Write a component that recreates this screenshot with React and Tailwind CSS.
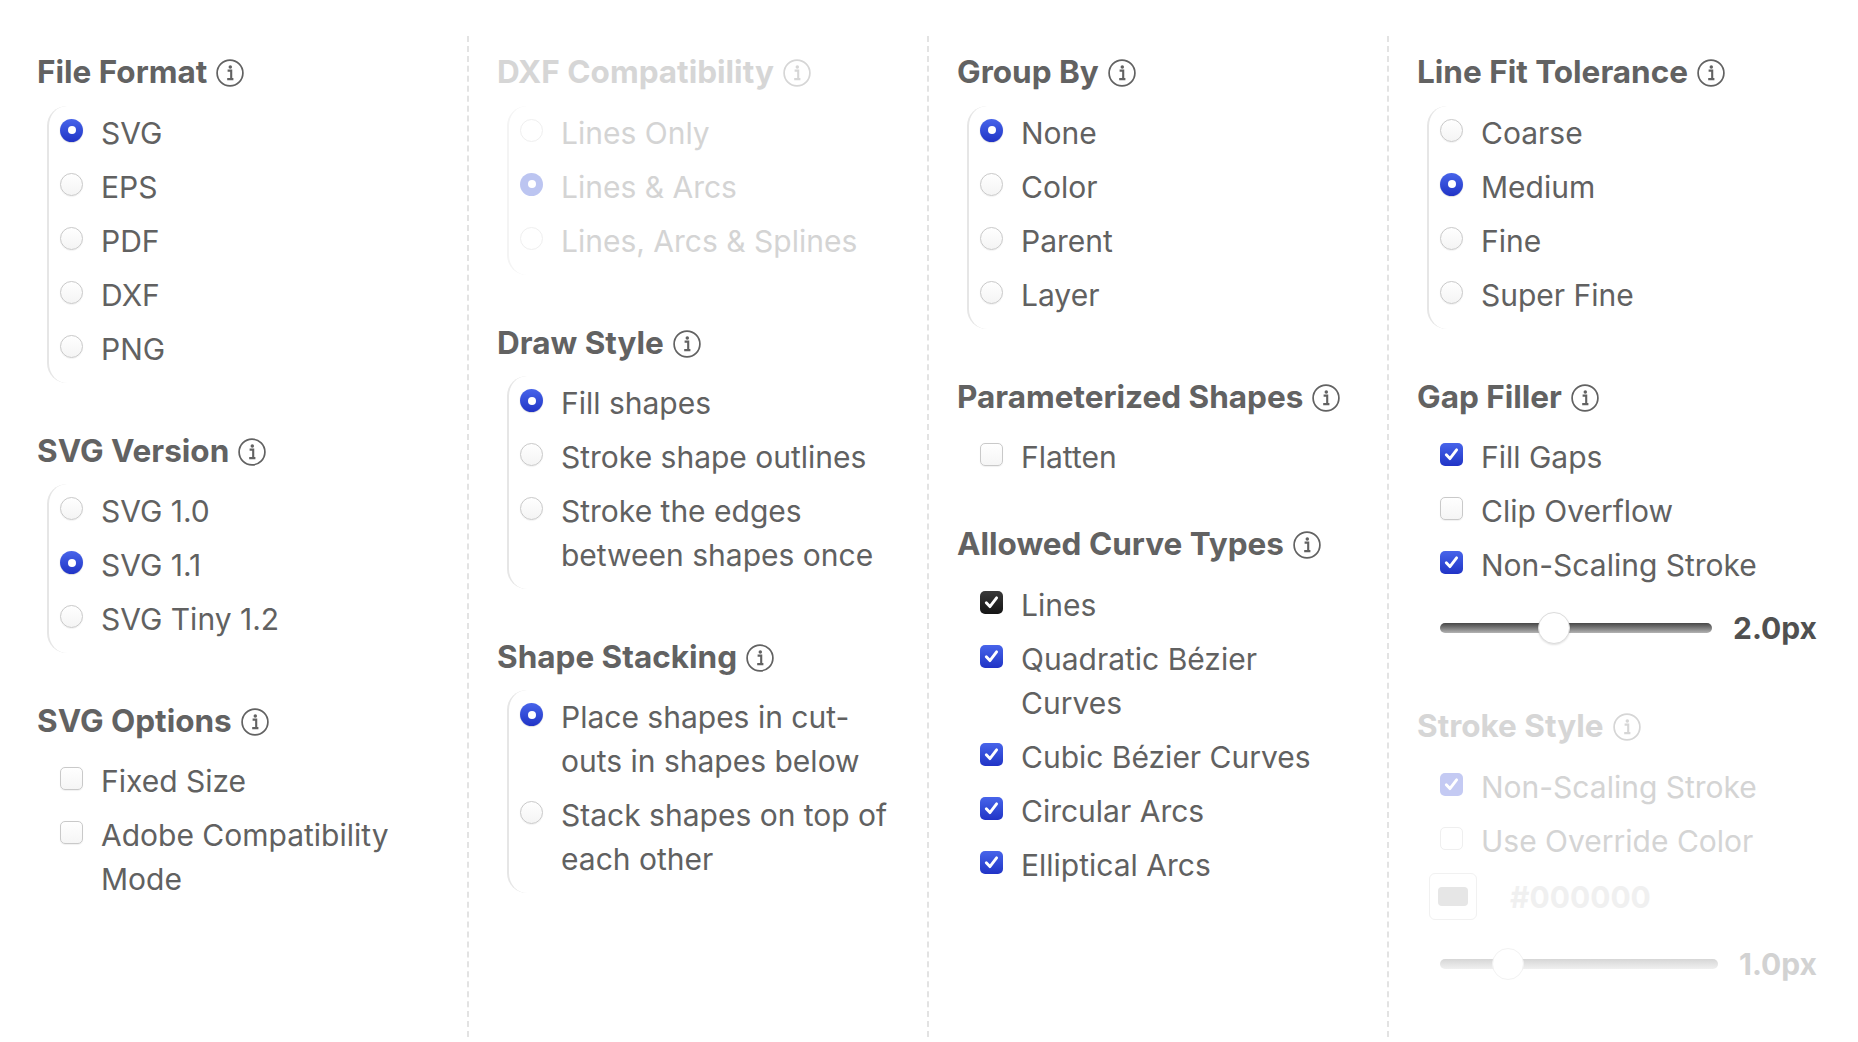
import React from "react";

function InfoIcon({ muted }) {
  const c = muted ? "#d6d6d6" : "#626262";
  return (
    <svg width="28" height="28" viewBox="0 0 28 28" className="ml-[9px] shrink-0 translate-y-[1px]">
      <circle cx="14" cy="14" r="12.9" fill="none" stroke={c} strokeWidth="1.7" />
      <circle cx="14.3" cy="7.9" r="1.75" fill={c} />
      <path d="M11.6 11.6 H15.2 V19.6 M11.2 20.1 H17.4" fill="none" stroke={c} strokeWidth="2.1" />
    </svg>
  );
}

function Heading({ title, disabled }) {
  return (
    <h3
      className={`flex items-center h-[38px] leading-[38px] text-[31.5px] font-bold ${
        disabled ? "text-[#d6d6d6]" : "text-[#626262]"
      }`}
    >
      {title}
      <InfoIcon muted={disabled} />
    </h3>
  );
}

function Radio({ checked, disabled }) {
  if (checked) {
    return (
      <span
        className={`mt-[8px] shrink-0 w-[23px] h-[23px] rounded-full flex items-center justify-center ${
          disabled
            ? "bg-[#bcc5f1]"
            : "bg-linear-to-b from-[#4864ea] to-[#2133c6] shadow-[0_0.5px_1px_rgba(0,0,0,0.25)]"
        }`}
      >
        <span className="w-[8px] h-[8px] rounded-full bg-white" />
      </span>
    );
  }
  return (
    <span
      className={`mt-[8px] shrink-0 w-[23px] h-[23px] rounded-full border ${
        disabled
          ? "border-[#efefef] bg-white"
          : "border-[#c9c9c9] bg-linear-to-b from-white to-[#f4f4f4] shadow-[0_0.5px_1px_rgba(0,0,0,0.08)]"
      }`}
    />
  );
}

function Check({ checked, disabled, dark }) {
  if (checked) {
    const bg = disabled
      ? "bg-[#c4caf3]"
      : dark
      ? "bg-linear-to-b from-[#3a3a3a] to-[#151515]"
      : "bg-linear-to-b from-[#4864ea] to-[#2133c6]";
    return (
      <span className={`mt-[8px] shrink-0 w-[23px] h-[23px] rounded-[5px] flex items-center justify-center ${bg}`}>
        <svg width="23" height="23" viewBox="0 0 23 23">
          <path d="M6.3 11.8 L9.9 15.6 L16.6 6.9" fill="none" stroke="white" strokeWidth="2.9" strokeLinecap="round" strokeLinejoin="round" />
        </svg>
      </span>
    );
  }
  return (
    <span
      className={`mt-[8px] shrink-0 w-[23px] h-[23px] rounded-[5px] border ${
        disabled
          ? "border-[#efefef] bg-white"
          : "border-[#c9c9c9] bg-linear-to-b from-white to-[#f5f5f5] shadow-[0_0.5px_1px_rgba(0,0,0,0.06)]"
      }`}
    />
  );
}

function Row({ label, type, checked, disabled, dark }) {
  return (
    <div className="flex items-start py-[5px]">
      {type === "radio" ? (
        <Radio checked={checked} disabled={disabled} />
      ) : (
        <Check checked={checked} disabled={disabled} dark={dark} />
      )}
      <span
        className={`ml-[18px] leading-[44px] text-[30px] ${
          disabled ? "text-[#d4d4d4]" : "text-[#616161]"
        }`}
      >
        {label}
      </span>
    </div>
  );
}

function Section({ title, type, items, disabled, extra }) {
  const bracket = type === "radio";
  return (
    <div>
      <Heading title={title} disabled={disabled} />
      <div
        className={`mt-[14.5px] ml-[10px] pl-[11px] border-l-2 ${
          bracket
            ? `rounded-l-[20px] pb-[7px] mb-[7.6px] ${disabled ? "border-[#f4f4f4]" : "border-[#e6e6e6]"}`
            : "border-transparent"
        }`}
      >
        {items.map((it) => (
          <Row key={it.label} type={type} disabled={disabled} {...it} />
        ))}
        {extra}
      </div>
    </div>
  );
}

function Slider({ value, label, disabled, className }) {
  return (
    <div className={`flex items-center h-[44px] ${className}`}>
      <div
        className={`relative flex-1 h-[10px] rounded-full ${
          disabled ? "bg-linear-to-b from-[#d6d6d6] to-[#f0f0f0]" : "bg-linear-to-b from-[#474747] to-[#b3b3b3]"
        }`}
      >
        <div
          className={`absolute top-1/2 -translate-y-1/2 w-[32px] h-[32px] rounded-full bg-white border ${
            disabled ? "border-[#f2f2f2]" : "border-[#dcdcdc] shadow-[0_1px_2px_rgba(0,0,0,0.12)]"
          }`}
          style={{ left: `calc(${value * 100}% - ${value * 32}px)` }}
        />
      </div>
      <span
        className={`ml-[21px] text-[30px] leading-[44px] font-bold ${
          disabled ? "text-[#d2d2d2]" : "text-[#505050]"
        }`}
      >
        {label}
      </span>
    </div>
  );
}

const r = (label, checked) => ({ label, checked });

export default function App() {
  return (
    <div className="w-[1858px] h-[1042px] bg-white pt-[36px] font-[Inter,'Noto_Sans',sans-serif] overflow-hidden">
      <div className="ml-[7px] grid grid-cols-[460px_460px_460px_460px] h-[1001px]">
        {/* Column 1 */}
        <div className="flex flex-col gap-[41.2px] pt-[17.4px] px-[30px]">
          <Section
            title="File Format"
            type="radio"
            items={[r("SVG", true), r("EPS"), r("PDF"), r("DXF"), r("PNG")]}
          />
          <Section
            title="SVG Version"
            type="radio"
            items={[r("SVG 1.0"), r("SVG 1.1", true), r("SVG Tiny 1.2")]}
          />
          <Section
            title="SVG Options"
            type="check"
            items={[r("Fixed Size"), r("Adobe Compatibility Mode")]}
          />
        </div>

        {/* Column 2 */}
        <div className="flex flex-col gap-[41.2px] pt-[17.4px] pl-[28px] pr-[30px] border-l-2 border-dashed border-[#e3e3e3]">
          <Section
            title="DXF Compatibility"
            type="radio"
            disabled
            items={[r("Lines Only"), r("Lines & Arcs", true), r("Lines, Arcs & Splines")]}
          />
          <Section
            title="Draw Style"
            type="radio"
            items={[
              r("Fill shapes", true),
              r("Stroke shape outlines"),
              r("Stroke the edges between shapes once"),
            ]}
          />
          <Section
            title="Shape Stacking"
            type="radio"
            items={[r("Place shapes in cut-outs in shapes below", true), r("Stack shapes on top of each other")]}
          />
        </div>

        {/* Column 3 */}
        <div className="flex flex-col gap-[41.2px] pt-[17.4px] pl-[28px] pr-[30px] border-l-2 border-dashed border-[#e3e3e3]">
          <Section
            title="Group By"
            type="radio"
            items={[r("None", true), r("Color"), r("Parent"), r("Layer")]}
          />
          <Section title="Parameterized Shapes" type="check" items={[r("Flatten")]} />
          <Section
            title="Allowed Curve Types"
            type="check"
            items={[
              { label: "Lines", checked: true, dark: true },
              r("Quadratic Bézier Curves", true),
              r("Cubic Bézier Curves", true),
              r("Circular Arcs", true),
              r("Elliptical Arcs", true),
            ]}
          />
        </div>

        {/* Column 4 */}
        <div className="flex flex-col gap-[41.2px] pt-[17.4px] pl-[28px] pr-[30px] border-l-2 border-dashed border-[#e3e3e3]">
          <Section
            title="Line Fit Tolerance"
            type="radio"
            items={[r("Coarse"), r("Medium", true), r("Fine"), r("Super Fine")]}
          />
          <Section
            title="Gap Filler"
            type="check"
            items={[r("Fill Gaps", true), r("Clip Overflow"), r("Non-Scaling Stroke", true)]}
            extra={<Slider value={0.41} label="2.0px" className="mt-[13.7px] mb-[16.2px]" />}
          />
          <Section
            title="Stroke Style"
            type="check"
            disabled
            items={[r("Non-Scaling Stroke", true), r("Use Override Color")]}
            extra={
              <>
                <div className="flex items-center mt-[5.4px] -ml-[11px]">
                  <div className="w-[48px] h-[47px] rounded-[6px] border border-[#f1f1f1] flex items-center justify-center">
                    <div className="w-[30px] h-[19px] rounded-[4px] bg-[#e6e6e6]" />
                  </div>
                  <span className="ml-[33px] text-[30px] leading-[44px] font-bold text-[#f0f0f0]">#000000</span>
                </div>
                <Slider value={0.21} label="1.0px" disabled className="mt-[21.7px]" />
              </>
            }
          />
        </div>
      </div>
    </div>
  );
}
